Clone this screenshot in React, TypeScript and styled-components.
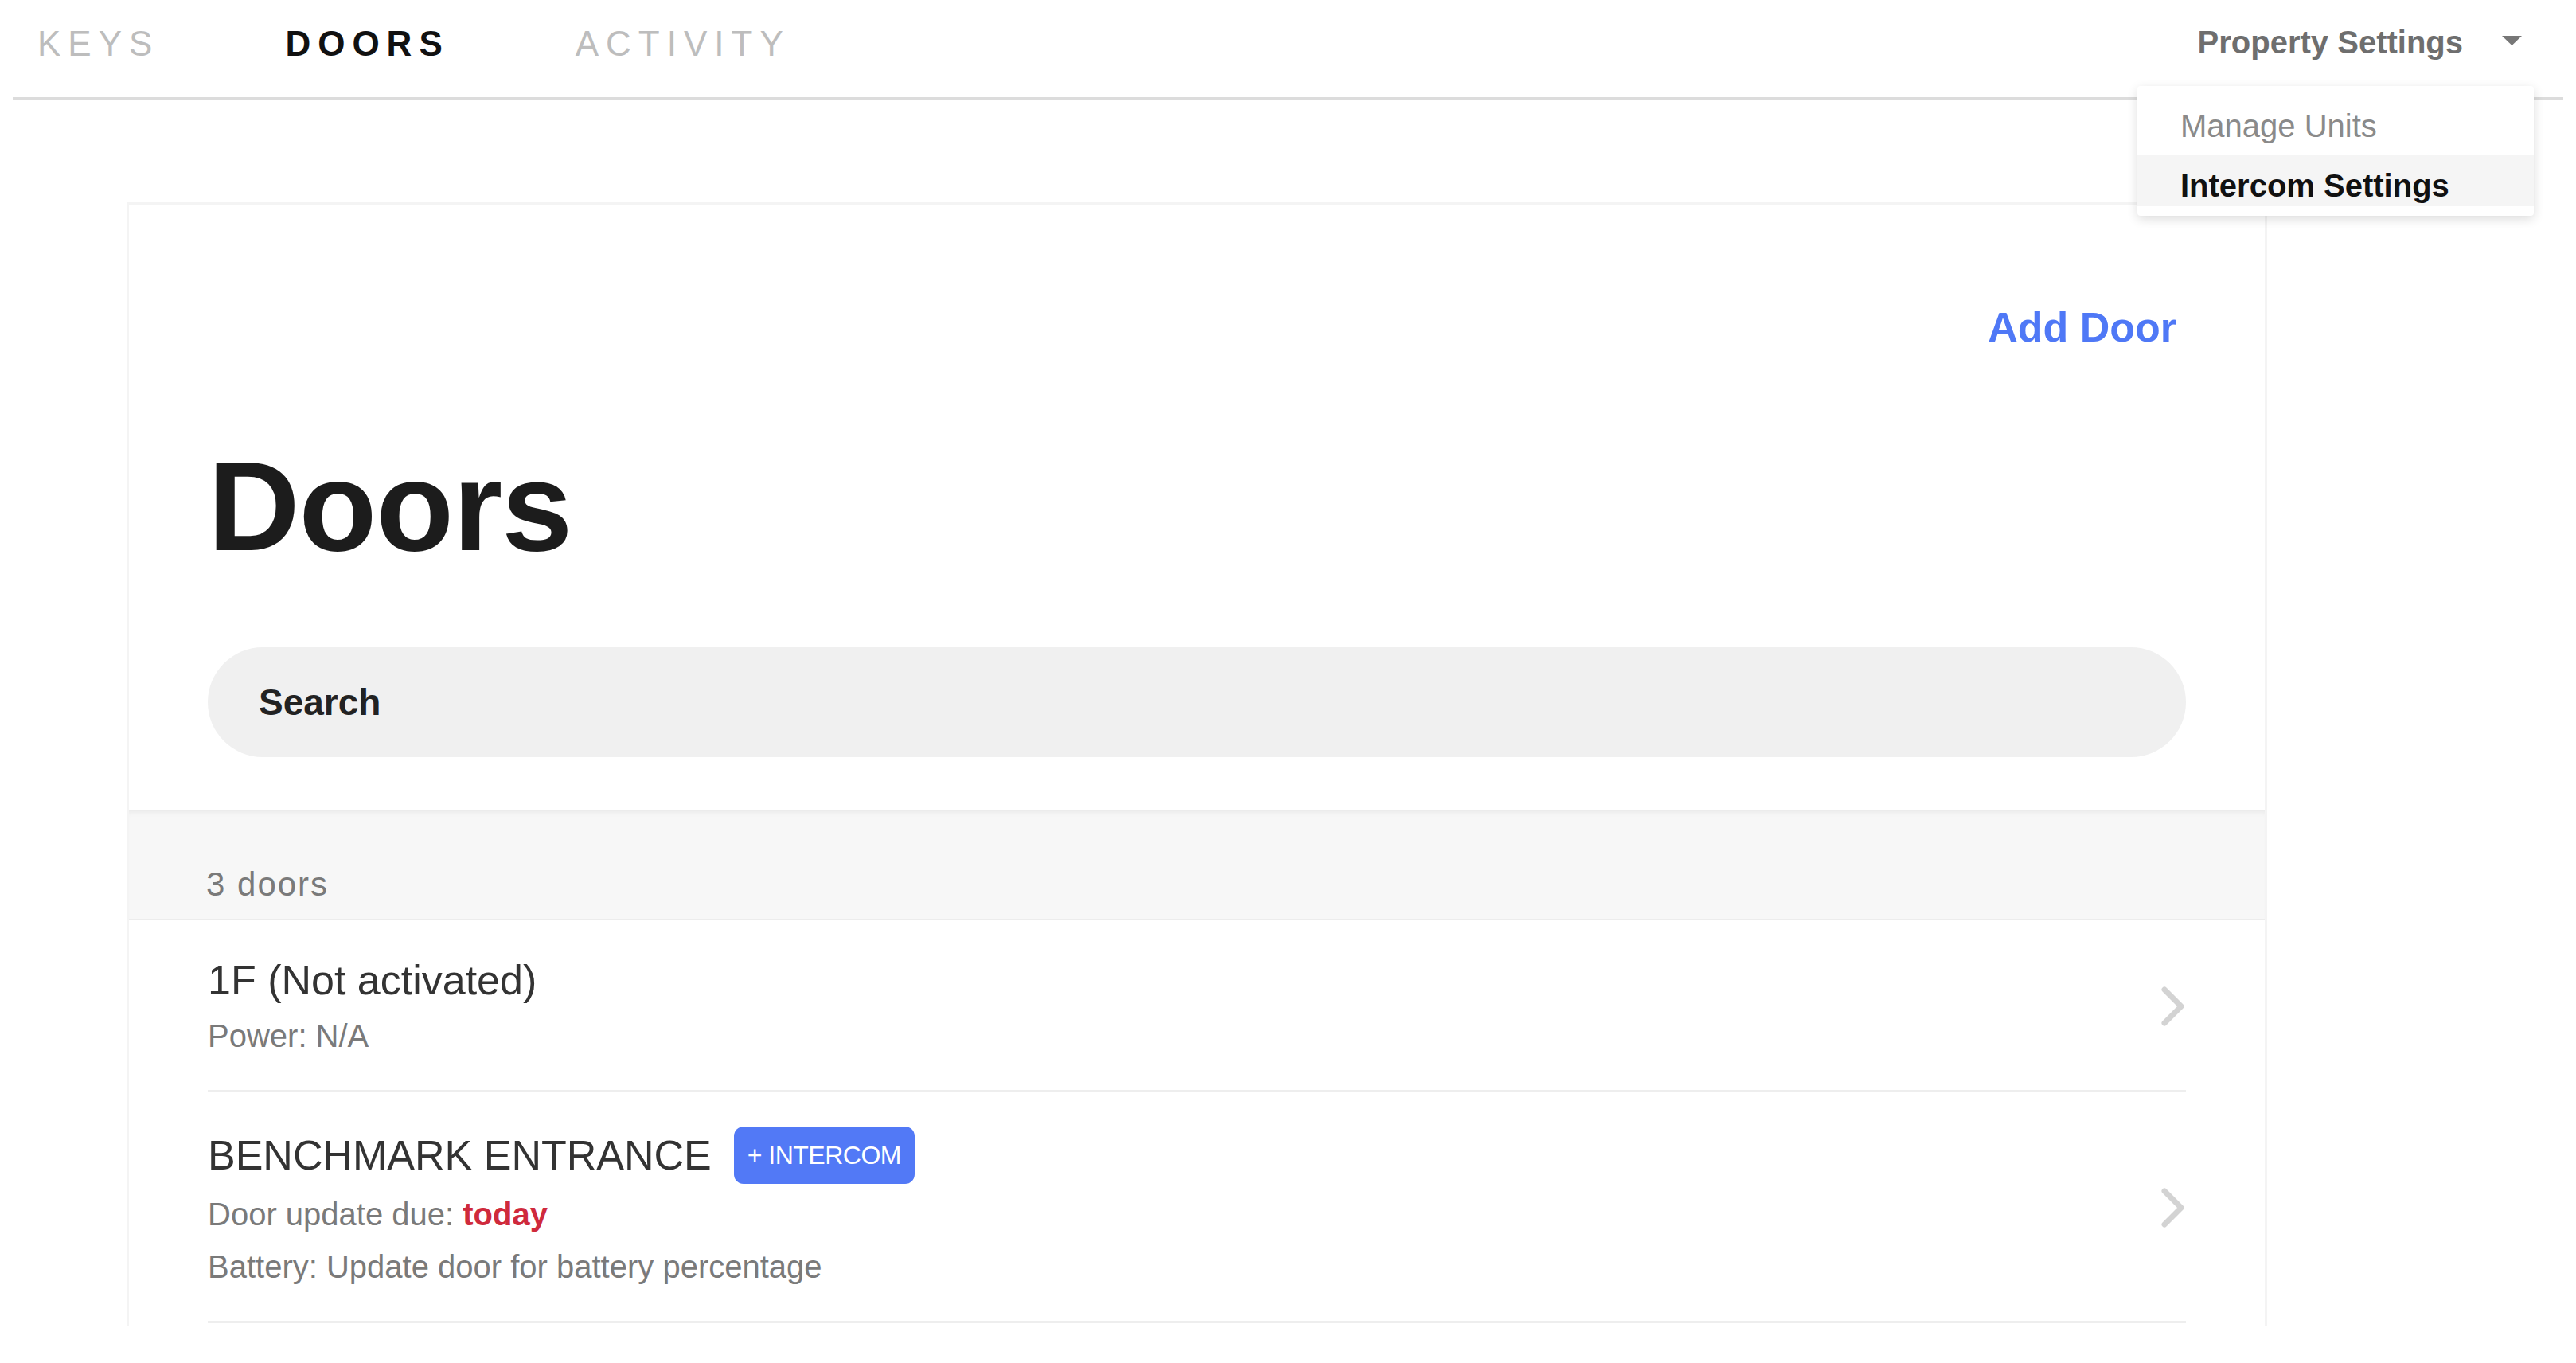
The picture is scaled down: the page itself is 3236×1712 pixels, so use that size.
import React from 'react';
import styled, { createGlobalStyle } from 'styled-components';

const GlobalStyle = createGlobalStyle`
    * {
        box-sizing: border-box;
    }
    body {
        margin: 0;
        background: #ffffff;
        font-family: 'Liberation Sans', Arial, sans-serif;
    }
`;

const Page = styled.div`
    width: 3236px;
    height: 1712px;
    overflow: hidden;
    background: #ffffff;
`;

const Nav = styled.nav`
    display: flex;
    justify-content: space-between;
    align-items: flex-start;
    height: 125px;
    margin: 0 16px;
    padding: 27px 52px 0 31px;
    border-bottom: 3px solid #dcdcdc;
`;

const Tabs = styled.div`
    display: flex;
    gap: 158px;
`;

const Tab = styled.a<{ $active?: boolean }>`
    font-size: 44px;
    line-height: 56px;
    letter-spacing: 9px;
    font-weight: ${({ $active }) => ($active ? 700 : 400)};
    color: ${({ $active }) => ($active ? '#111111' : '#bdbdbd')};
    text-decoration: none;
`;

const SettingsWrapper = styled.div`
    position: relative;
    display: flex;
    align-items: center;
    gap: 49px;
    height: 56px;
    margin-top: -2px;
`;

const SettingsLabel = styled.span`
    font-size: 40px;
    font-weight: 700;
    color: #6e6e6e;
`;

const Caret = styled.svg`
    width: 25px;
    height: 12px;
    margin-top: -4px;
`;

const Menu = styled.ul`
    position: absolute;
    top: 83px;
    right: -15px;
    width: 498px;
    margin: 0;
    padding: 23px 0 12px;
    list-style: none;
    background: #ffffff;
    border-radius: 4px;
    box-shadow: 0 4px 14px rgba(0, 0, 0, 0.14);
    z-index: 10;
`;

const MenuItem = styled.li<{ $active?: boolean }>`
    height: 64px;
    padding-left: 54px;
    padding-top: ${({ $active }) => ($active ? '12px' : '0')};
    padding-bottom: ${({ $active }) => ($active ? '0' : '10px')};
    display: flex;
    align-items: center;
    font-size: 40px;
    font-weight: ${({ $active }) => ($active ? 700 : 400)};
    color: ${({ $active }) => ($active ? '#111111' : '#8a8a8a')};
    background: ${({ $active }) => ($active ? '#f5f5f5' : 'transparent')};
`;

const ScrollArea = styled.main`
    height: 1541px;
    overflow: hidden;
    padding-top: 129px;
`;

const Card = styled.section`
    width: 2689px;
    margin-left: 159px;
    border: 3px solid #f4f4f4;
    border-bottom: none;
    padding-bottom: 40px;
`;

const CardHeader = styled.div`
    display: flex;
    flex-direction: column;
    padding: 124px 99px 66px;
`;

const AddDoor = styled.a`
    align-self: flex-end;
    margin-right: 12px;
    font-size: 52px;
    line-height: 60px;
    font-weight: 700;
    color: #4f78f6;
    text-decoration: none;
`;

const Title = styled.h1`
    margin: 115px 0 0;
    font-size: 160px;
    line-height: 160px;
    font-weight: 700;
    letter-spacing: -1px;
    color: #1c1c1c;
`;

const SearchBox = styled.div`
    display: flex;
    align-items: center;
    height: 138px;
    margin-top: 97px;
    padding-left: 62px;
    border-radius: 69px;
    background: #f0f0f0;
`;

const SearchInput = styled.input`
    flex: 1;
    border: none;
    outline: none;
    background: transparent;
    font-family: 'Liberation Sans', Arial, sans-serif;
    font-size: 46px;
    font-weight: 700;
    color: #222222;

    &::placeholder {
        color: #222222;
    }
`;

const CountBar = styled.div`
    padding: 68px 99px 19px 97px;
    background: #f7f7f7;
    border-top: 2px solid #ececec;
    border-bottom: 2px solid #ececec;
    box-shadow: inset 0 6px 6px -4px rgba(0, 0, 0, 0.05);
    font-size: 42px;
    line-height: 48px;
    letter-spacing: 2px;
    color: #7a7a7a;
`;

const List = styled.ul`
    margin: 0;
    padding: 0 99px;
    list-style: none;
`;

const DoorRow = styled.li`
    display: flex;
    align-items: center;
    justify-content: space-between;
    padding: 43px 0 40px;
    border-bottom: 3px solid #eeeeee;
`;

const DoorInfo = styled.div`
    display: flex;
    flex-direction: column;
`;

const DoorTitleRow = styled.div`
    display: flex;
    align-items: center;
    gap: 28px;
    min-height: 64px;
`;

const DoorName = styled.span`
    font-size: 52px;
    line-height: 64px;
    color: #333333;
`;

const Badge = styled.span`
    display: inline-flex;
    align-items: center;
    height: 72px;
    padding: 0 17px;
    border-radius: 12px;
    background: #5279f6;
    color: #ffffff;
    font-size: 32px;
    letter-spacing: -0.5px;
`;

const DetailLine = styled.div`
    margin-top: 10px;
    font-size: 40px;
    line-height: 56px;
    color: #7a7a7a;
`;

const Due = styled.strong`
    color: #cf2a3c;
`;

const Chevron = styled.svg`
    width: 32px;
    height: 52px;
    flex-shrink: 0;
`;

const ChevronIcon = () => (
    <Chevron viewBox="0 0 32 52">
        <polyline points="5,5 26,26 5,47" fill="none" stroke="#d3d3d3" strokeWidth="7" strokeLinecap="round" strokeLinejoin="round" />
    </Chevron>
);

const App: React.FC = () => {
    return (
        <Page>
            <GlobalStyle />
            <Nav>
                <Tabs>
                    <Tab>KEYS</Tab>
                    <Tab $active>DOORS</Tab>
                    <Tab>ACTIVITY</Tab>
                </Tabs>
                <SettingsWrapper>
                    <SettingsLabel>Property Settings</SettingsLabel>
                    <Caret viewBox="0 0 25 12">
                        <polygon points="0,0 25,0 12.5,12" fill="#777777" />
                    </Caret>
                    <Menu>
                        <MenuItem>Manage Units</MenuItem>
                        <MenuItem $active>Intercom Settings</MenuItem>
                    </Menu>
                </SettingsWrapper>
            </Nav>
            <ScrollArea>
                <Card>
                    <CardHeader>
                        <AddDoor>Add Door</AddDoor>
                        <Title>Doors</Title>
                        <SearchBox>
                            <SearchInput placeholder="Search" />
                        </SearchBox>
                    </CardHeader>
                    <CountBar>3 doors</CountBar>
                    <List>
                        <DoorRow>
                            <DoorInfo>
                                <DoorTitleRow>
                                    <DoorName>1F (Not activated)</DoorName>
                                </DoorTitleRow>
                                <DetailLine>Power: N/A</DetailLine>
                            </DoorInfo>
                            <ChevronIcon />
                        </DoorRow>
                        <DoorRow>
                            <DoorInfo>
                                <DoorTitleRow>
                                    <DoorName>BENCHMARK ENTRANCE</DoorName>
                                    <Badge>+ INTERCOM</Badge>
                                </DoorTitleRow>
                                <DetailLine>
                                    Door update due: <Due>today</Due>
                                </DetailLine>
                                <DetailLine>Battery: Update door for battery percentage</DetailLine>
                            </DoorInfo>
                            <ChevronIcon />
                        </DoorRow>
                    </List>
                </Card>
            </ScrollArea>
        </Page>
    );
};

export default App;
